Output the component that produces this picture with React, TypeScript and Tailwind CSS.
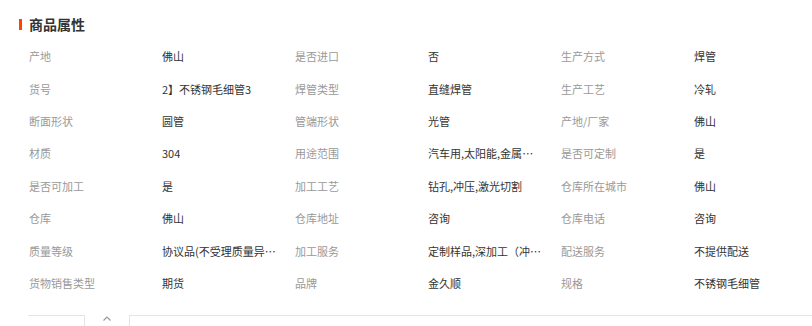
const attrs: [string, string][] = [
  ['产地', '佛山'], ['是否进口', '否'], ['生产方式', '焊管'],
  ['货号', '2】不锈钢毛细管3'], ['焊管类型', '直缝焊管'], ['生产工艺', '冷轧'],
  ['断面形状', '圆管'], ['管端形状', '光管'], ['产地/厂家', '佛山'],
  ['材质', '304'], ['用途范围', '汽车用,太阳能,金属制品,机械设备'], ['是否可定制', '是'],
  ['是否可加工', '是'], ['加工工艺', '钻孔,冲压,激光切割'], ['仓库所在城市', '佛山'],
  ['仓库', '佛山'], ['仓库地址', '咨询'], ['仓库电话', '咨询'],
  ['质量等级', '协议品(不受理质量异议)'], ['加工服务', '定制样品,深加工（冲压、切割）'], ['配送服务', '不提供配送'],
  ['货物销售类型', '期货'], ['品牌', '金久顺'], ['规格', '不锈钢毛细管'],
]

export default function App() {
  return (
    <div className="w-[812px] h-[326px] bg-white overflow-hidden text-[11px] font-['Noto_Sans_CJK_SC','Noto_Sans',sans-serif]">
      <div className="flex items-center h-[20px] mt-[14px] ml-[19px]">
        <span className="w-[3px] h-[11px] bg-[#ff4400]" />
        <span className="ml-[7px] text-[14px] font-bold text-[#333] leading-none">商品属性</span>
      </div>

      <div className="grid grid-cols-[133px_133px_133px_133px_133px_133px] auto-rows-[32.4px] ml-[29px] mt-[6px]">
        {attrs.map(([label, value], i) => (
          <div key={i} className="contents">
            <div className="flex items-center text-[#999] leading-[16px]">{label}</div>
            <div className="flex items-center min-w-0 pr-[18px] text-[#333] leading-[16px]">
              <span className="truncate">{value}</span>
            </div>
          </div>
        ))}
      </div>

      <div className="flex mt-[16px] h-[12px]">
        <div className="ml-[28px] w-[57px] border-t border-r border-[#e5e5e5]" />
        <div className="w-[44px] flex justify-center pt-[1px]">
          <svg width="8" height="5" viewBox="0 0 8 5" fill="none">
            <path d="M0.5 4.5L4 1L7.5 4.5" stroke="#999" strokeWidth="1.2" />
          </svg>
        </div>
        <div className="flex-1 border-t border-l border-[#e5e5e5]" />
      </div>
    </div>
  )
}
